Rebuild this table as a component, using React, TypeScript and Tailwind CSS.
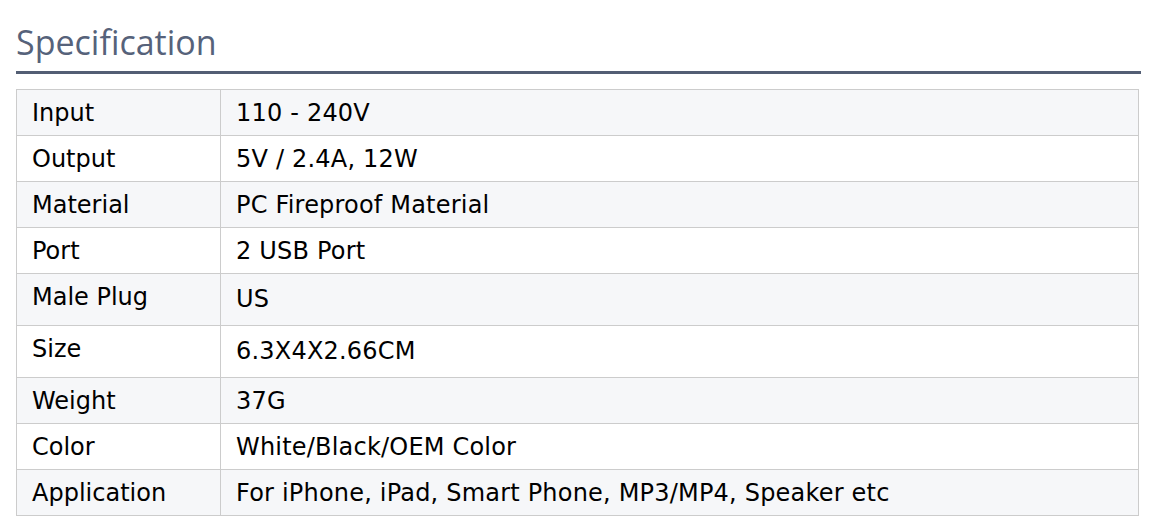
import React from "react";

const rows: { k: string; v: string; tall?: boolean }[] = [
  { k: "Input", v: "110 - 240V" },
  { k: "Output", v: "5V / 2.4A, 12W" },
  { k: "Material", v: "PC Fireproof Material" },
  { k: "Port", v: "2 USB Port" },
  { k: "Male Plug", v: "US", tall: true },
  { k: "Size", v: "6.3X4X2.66CM", tall: true },
  { k: "Weight", v: "37G" },
  { k: "Color", v: "White/Black/OEM Color" },
  { k: "Application", v: "For iPhone, iPad, Smart Phone, MP3/MP4, Speaker etc" },
];

export default function App() {
  return (
    <div className="w-[1156px] h-[530px] bg-white px-4">
      <h2
        className="w-[1125px] pt-[22px] pb-[9px] border-b-[3px] border-[#535e74] text-[34px] leading-[40px] text-[#56627a] font-normal"
        style={{ fontFamily: '"Open Sans", sans-serif' }}
      >
        Specification
      </h2>
      <table
        className="mt-[15px] w-[1123px] border-collapse table-fixed text-[24px] leading-[36px] text-black"
        style={{ fontFamily: '"DejaVu Sans", sans-serif' }}
      >
        <colgroup>
          <col className="w-[204px]" />
          <col />
        </colgroup>
        <tbody>
          {rows.map((r, i) => (
            <tr key={r.k} className={i % 2 === 0 ? "bg-[#f6f7f9]" : "bg-white"}>
              <td
                className={
                  "border border-[#cccccc] pl-[15px] pr-[14px] align-top pt-[5px] " +
                  (r.tall ? "pb-[10px]" : "pb-[4px]")
                }
              >
                {r.k}
              </td>
              <td
                className={
                  "border border-[#cccccc] pl-[15px] pr-[14px] align-top tracking-[0.2px] " +
                  (r.tall ? "pt-[7px] pb-[8px]" : "pt-[5px] pb-[4px]")
                }
              >
                {r.v}
              </td>
            </tr>
          ))}
        </tbody>
      </table>
    </div>
  );
}
